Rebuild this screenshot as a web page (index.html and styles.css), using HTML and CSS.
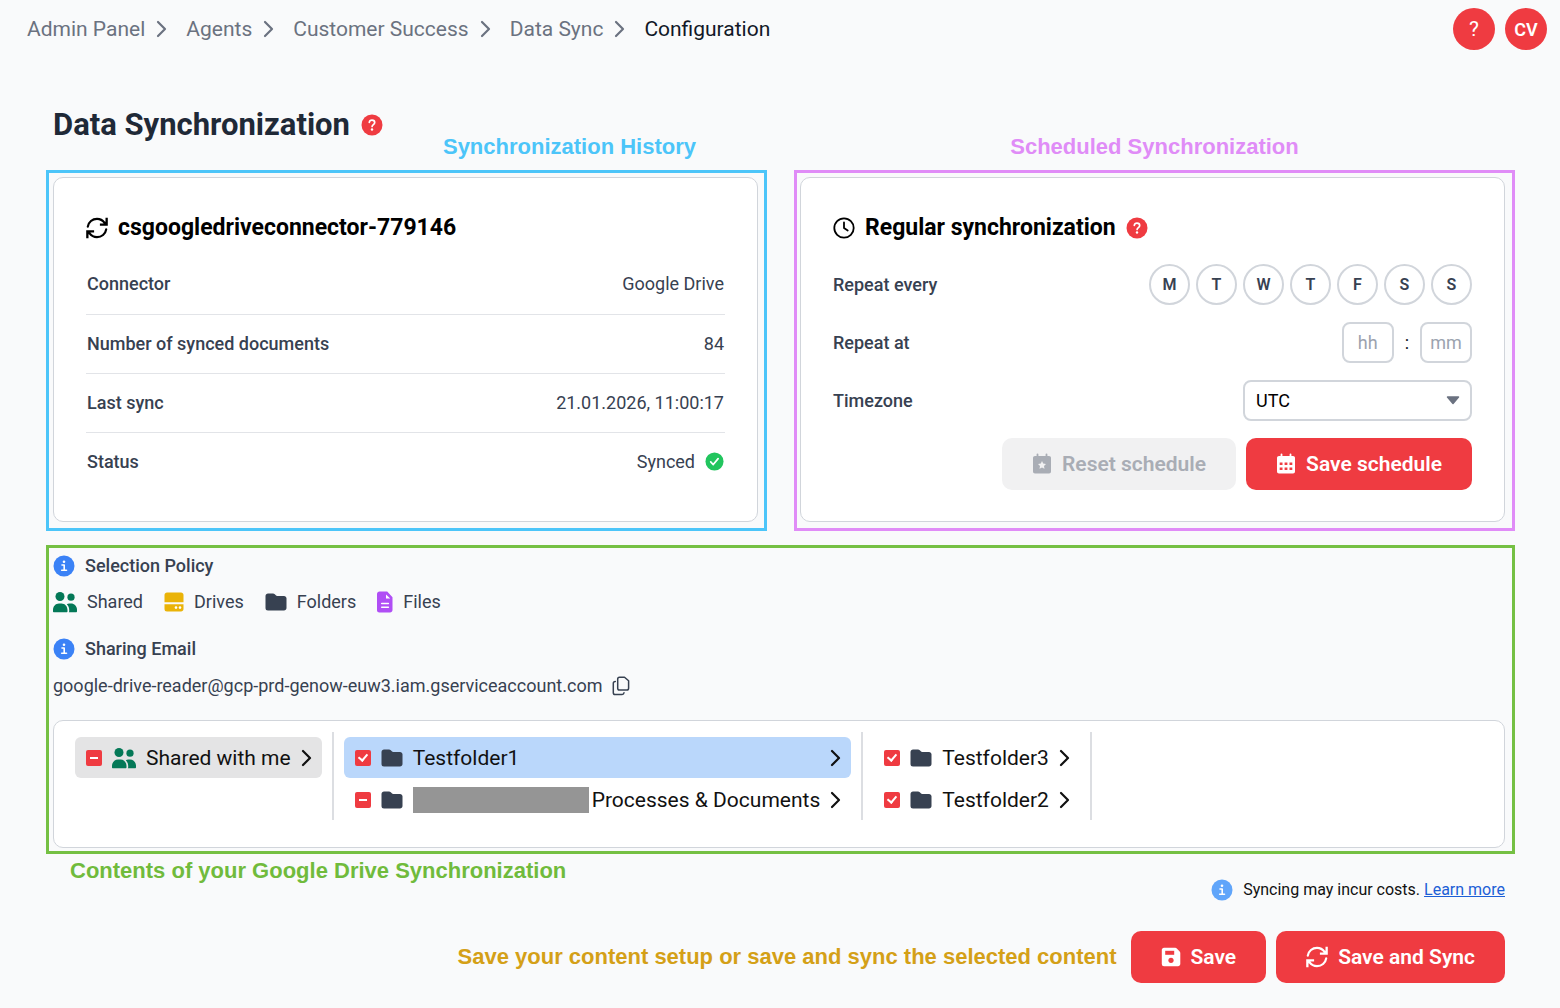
FILE: index.html
```html
<!DOCTYPE html>
<html lang="en">
<head>
<meta charset="UTF-8">
<meta name="viewport" content="width=device-width, initial-scale=1.0">
<title>Data Synchronization</title>
<link rel="stylesheet" href="styles.css">
</head>
<body>

<!-- icons used on the page -->
<svg class="sprite" aria-hidden="true">
    <symbol id="chevron" viewBox="0 0 12 18"><path d="M2 2l7 7-7 7" fill="none" stroke="currentColor" stroke-width="2.2" stroke-linecap="round" stroke-linejoin="round"/></symbol>
    <symbol id="sync" viewBox="0 0 22 22">
        <path d="M1.8 9.6C2.5 5 6.4 1.8 11 1.8c3.2 0 5.8 1.5 7.6 4" fill="none" stroke="currentColor" stroke-width="2.2" stroke-linecap="round"/>
        <path d="M20.2 12.4C19.5 17 15.6 20.2 11 20.2c-3.2 0-5.8-1.5-7.6-4" fill="none" stroke="currentColor" stroke-width="2.2" stroke-linecap="round"/>
        <path d="M21.8.8v7.9h-7.9V6.5h3.5l2.1-2.1V.8zM.2 21.2v-7.9h7.9v2.200H4.600l-2.100 2.100v3.600z" fill="currentColor"/>
    </symbol>
    <symbol id="clock" viewBox="0 0 22 22"><circle cx="11" cy="11" r="9.7" fill="none" stroke="currentColor" stroke-width="1.8"/><path d="M11 5.500V11l3.700 2.500" fill="none" stroke="currentColor" stroke-width="1.8" stroke-linecap="round" stroke-linejoin="round"/></symbol>
    <symbol id="info" viewBox="0 0 22 22"><circle cx="11" cy="11" r="10.5" fill="currentColor"/><circle cx="11" cy="6.8" r="1.3" fill="#fff"/><path d="M9 10h2.2v5M8.700 15.300h4.800" fill="none" stroke="#fff" stroke-width="1.6" stroke-linecap="round" stroke-linejoin="round"/></symbol>
    <symbol id="help" viewBox="0 0 22 22"><circle cx="11" cy="11" r="10.5" fill="currentColor"/><path d="M8.3 8.3c.2-1.4 1.3-2.2 2.7-2.2 1.5 0 2.7 1 2.7 2.4 0 2-2.6 2.1-2.6 4" fill="none" stroke="#fff" stroke-width="1.7" stroke-linecap="round"/><circle cx="11" cy="15.5" r="1.2" fill="#fff"/></symbol>
    <symbol id="done" viewBox="0 0 20 20"><circle cx="10" cy="10" r="9.5" fill="currentColor"/><path d="M6 10.5l2.7 2.7L13.8 7" fill="none" stroke="#fff" stroke-width="1.8" stroke-linecap="round" stroke-linejoin="round"/></symbol>
    <symbol id="people" viewBox="0 0 24 22">
        <circle cx="7" cy="5.5" r="4.5" fill="currentColor"/><circle cx="18" cy="6.2" r="3.6" fill="currentColor"/>
        <path d="M0 20.500v-1.500c0-3.600 2.600-6.500 6-6.500h2.500c3.400 0 6 2.900 6 6.500v1.500c0 .4-.3.7-.7.7H.7c-.4 0-.7-.3-.7-.7zM15.800 21.200c.3-.4.4-.7.4-1.200v-1c0-2.300-.9-4.300-2.400-5.700.7-.5 1.500-.7 2.400-.7h1.800c3.300 0 6 2.700 6 6v1.600c0 .6-.4 1-1 1z" fill="currentColor"/>
    </symbol>
    <symbol id="drive" viewBox="0 0 20 20"><path d="M3 .5h14c1.400 0 2.500 1.100 2.500 2.500v7.200H.5V3C.5 1.600 1.600.5 3 .5z" fill="currentColor"/><path d="M.5 12.200h19V17c0 1.400-1.100 2.500-2.500 2.500H3A2.500 2.500 0 0 1 .5 17z" fill="currentColor"/><circle cx="12" cy="15.6" r="1.3" fill="#fff"/><circle cx="16" cy="15.6" r="1.3" fill="#fff"/></symbol>
    <symbol id="folder" viewBox="0 0 22 18"><path d="M3 .5h5c.7 0 1.300.3 1.800.8l1 1c.4.4.9.6 1.400.6H19c1.400 0 2.500 1 2.500 2.400V15c0 1.400-1.100 2.500-2.500 2.500H3A2.500 2.500 0 0 1 .5 15V3C.5 1.600 1.600.5 3 .5z" fill="currentColor"/></symbol>
    <symbol id="file" viewBox="0 0 16 22"><path d="M2.500.5h7.700l5.300 5.700v12.800c0 1.400-1.100 2.500-2.500 2.500H2.500A2.400 2.400 0 0 1 0 19V3C0 1.600 1.100.5 2.500.5z" fill="currentColor"/><path d="M9 3.500v4h4.200z" fill="#fff"/><path d="M4.700 12.500h6.700M4.700 16.200h6.700" stroke="#fff" stroke-width="1.5" stroke-linecap="round"/></symbol>
    <symbol id="copy" viewBox="0 0 18 20"><path d="M7.500 1.200h5L16.600 4.800v7.400c0 1-.8 1.800-1.800 1.800H7.500c-1 0-1.800-.8-1.800-1.800V3c0-1 .8-1.800 1.800-1.800z" fill="none" stroke="currentColor" stroke-width="1.5" stroke-linejoin="round"/><path d="M3.300 5.500C2 5.500 1.300 6.300 1.300 7.300v9.500c0 1 .8 1.800 1.800 1.800h7c1.200 0 1.800-.6 1.900-1.800" fill="none" stroke="currentColor" stroke-width="1.5" stroke-linecap="round"/></symbol>
    <symbol id="calendar-star" viewBox="0 0 20 22"><path d="M5.500 1.300v3M14.500 1.300v3" stroke="currentColor" stroke-width="1.8" stroke-linecap="round"/><path d="M3 3h14c1.200 0 2 .8 2 2v13.500c0 1.200-.8 2-2 2H3c-1.200 0-2-.8-2-2V5c0-1.200.8-2 2-2z" fill="currentColor"/><path d="M10 8l1.200 2.500 2.800.4-2 2 .5 2.800L10 14.400l-2.500 1.300.5-2.800-2-2 2.800-.4z" fill="#f1f1f2"/></symbol>
    <symbol id="calendar" viewBox="0 0 20 22"><path d="M5.500 1.300v3M14.500 1.300v3" stroke="currentColor" stroke-width="1.8" stroke-linecap="round"/><path d="M3 3h14c1.200 0 2 .8 2 2v13.500c0 1.200-.8 2-2 2H3c-1.200 0-2-.8-2-2V5c0-1.200.8-2 2-2z" fill="currentColor"/><path d="M3.700 9.500h2.800v2.500H3.700zM8.600 9.500h2.800v2.500H8.600zM13.500 9.500h2.800v2.500h-2.800zM3.700 14.500h2.800V17H3.700zM8.600 14.500h2.800V17H8.600zM13.500 14.500h2.800V17h-2.800z" fill="#ef3b41"/></symbol>
    <symbol id="floppy" viewBox="0 0 20 20"><path d="M3 .8h11.200c.6 0 1.200.3 1.600.7l2.900 2.900c.4.4.6 1 .6 1.600V17c0 1.200-1 2.300-2.300 2.300H3A2.300 2.300 0 0 1 .8 17V3C.8 1.800 1.800.8 3 .8z" fill="currentColor"/><path d="M4.200 3.800h9v4h-9z" fill="#ef3b41"/><circle cx="10" cy="13.3" r="2.6" fill="#ef3b41"/></symbol>
</svg>

<header class="topbar">
    <nav class="breadcrumb" aria-label="Breadcrumb">
        <a href="#">Admin Panel</a>
        <svg class="crumb-arrow"><use href="#chevron"/></svg>
        <a href="#">Agents</a>
        <svg class="crumb-arrow"><use href="#chevron"/></svg>
        <a href="#">Customer Success</a>
        <svg class="crumb-arrow"><use href="#chevron"/></svg>
        <a href="#">Data Sync</a>
        <svg class="crumb-arrow"><use href="#chevron"/></svg>
        <a href="#" class="current" aria-current="page">Configuration</a>
    </nav>
    <div class="account">
        <button class="round-button help-button">?</button>
        <button class="round-button">CV</button>
    </div>
</header>

<main>
    <h1>Data Synchronization <svg class="icon help"><use href="#help"/></svg></h1>

    <div class="panels">
        <section class="frame frame-blue">
            <span class="note note-history">Synchronization History</span>
            <div class="card">
                <h2><svg class="icon"><use href="#sync"/></svg> csgoogledriveconnector-779146</h2>
                <table class="details">
                    <tr><th>Connector</th><td>Google Drive</td></tr>
                    <tr><th>Number of synced documents</th><td>84</td></tr>
                    <tr><th>Last sync</th><td>21.01.2026, 11:00:17</td></tr>
                    <tr><th>Status</th><td><span class="status">Synced <svg class="done"><use href="#done"/></svg></span></td></tr>
                </table>
            </div>
        </section>

        <section class="frame frame-pink">
            <span class="note note-schedule">Scheduled Synchronization</span>
            <div class="card">
                <h2><svg class="icon"><use href="#clock"/></svg> Regular synchronization <svg class="icon help"><use href="#help"/></svg></h2>
                <form class="schedule">
                    <div class="field">
                        <span class="field-label">Repeat every</span>
                        <div class="days">
                            <button type="button" class="day">M</button>
                            <button type="button" class="day">T</button>
                            <button type="button" class="day">W</button>
                            <button type="button" class="day">T</button>
                            <button type="button" class="day">F</button>
                            <button type="button" class="day">S</button>
                            <button type="button" class="day">S</button>
                        </div>
                    </div>
                    <div class="field">
                        <label class="field-label" for="hour">Repeat at</label>
                        <div class="time">
                            <input type="text" id="hour" placeholder="hh">
                            <span>:</span>
                            <input type="text" id="minute" placeholder="mm" aria-label="Minutes">
                        </div>
                    </div>
                    <div class="field">
                        <label class="field-label" for="timezone">Timezone</label>
                        <div class="select-wrap">
                            <select id="timezone">
                                <option>UTC</option>
                            </select>
                            <svg class="caret" viewBox="0 0 14 9"><path d="M1.500 1h11L7 7.500z" fill="#6b7280" stroke="#6b7280" stroke-width="1.5" stroke-linejoin="round"/></svg>
                        </div>
                    </div>
                    <div class="buttons">
                        <button type="button" class="button" disabled><svg class="calendar"><use href="#calendar-star"/></svg> Reset schedule</button>
                        <button type="button" class="button"><svg class="calendar"><use href="#calendar"/></svg> Save schedule</button>
                    </div>
                </form>
            </div>
        </section>
    </div>

    <section class="frame frame-green">
        <h3><svg class="icon info"><use href="#info"/></svg> Selection Policy</h3>
        <ul class="legend">
            <li><svg class="people"><use href="#people"/></svg> Shared</li>
            <li><svg class="drive"><use href="#drive"/></svg> Drives</li>
            <li><svg class="folder"><use href="#folder"/></svg> Folders</li>
            <li><svg class="file"><use href="#file"/></svg> Files</li>
        </ul>
        <h3><svg class="icon info"><use href="#info"/></svg> Sharing Email</h3>
        <div class="email">
            google-drive-reader@gcp-prd-genow-euw3.iam.gserviceaccount.com
            <button class="copy-button" aria-label="Copy email"><svg class="copy"><use href="#copy"/></svg></button>
        </div>

        <div class="browser">
            <div class="column">
                <div class="item open">
                    <input type="checkbox" class="partial" id="shared">
                    <svg class="people"><use href="#people"/></svg>
                    <label for="shared">Shared with me</label>
                    <svg class="arrow"><use href="#chevron"/></svg>
                </div>
            </div>
            <div class="column">
                <div class="item selected">
                    <input type="checkbox" id="folder1" checked>
                    <svg class="folder"><use href="#folder"/></svg>
                    <label for="folder1">Testfolder1</label>
                    <svg class="arrow"><use href="#chevron"/></svg>
                </div>
                <div class="item">
                    <input type="checkbox" class="partial" id="processes">
                    <svg class="folder"><use href="#folder"/></svg>
                    <label for="processes"><span class="redacted"></span>Processes &amp; Documents</label>
                    <svg class="arrow"><use href="#chevron"/></svg>
                </div>
            </div>
            <div class="column">
                <div class="item">
                    <input type="checkbox" id="folder3" checked>
                    <svg class="folder"><use href="#folder"/></svg>
                    <label for="folder3">Testfolder3</label>
                    <svg class="arrow"><use href="#chevron"/></svg>
                </div>
                <div class="item">
                    <input type="checkbox" id="folder2" checked>
                    <svg class="folder"><use href="#folder"/></svg>
                    <label for="folder2">Testfolder2</label>
                    <svg class="arrow"><use href="#chevron"/></svg>
                </div>
            </div>
        </div>
    </section>

    <div class="below">
        <span class="note note-contents">Contents of your Google Drive Synchronization</span>
        <p class="costs"><svg class="icon info"><use href="#info"/></svg> <span>Syncing may incur costs. <a href="#">Learn more</a></span></p>
    </div>

    <div class="buttons save-row">
        <span class="note note-save">Save your content setup or save and sync the selected content</span>
        <button class="button"><svg class="floppy"><use href="#floppy"/></svg> Save</button>
        <button class="button"><svg class="icon"><use href="#sync"/></svg> Save and Sync</button>
    </div>
</main>

</body>
</html>
```

FILE: styles.css
```css
* {
    box-sizing: border-box;
}
body {
    margin: 0;
    font-family: Roboto, sans-serif;
    font-size: 18px;
    line-height: 24px;
    color: #374151;
    background-color: #f9fafb;
}
h1, h2, h3, p, ul {
    margin: 0;
    padding: 0;
}
button, input, select {
    font-family: inherit;
}
button {
    cursor: pointer;
}
svg {
    flex: none;
}
.sprite {
    position: absolute;
    width: 0;
    height: 0;
}
.icon {
    width: 22px;
    height: 22px;
}
.help {
    color: #ef3b41;
}
.info {
    color: #3b82f6;
}

/* top bar */
.topbar {
    display: flex;
    justify-content: space-between;
    align-items: center;
    padding: 8px 13px 8px 27px;
}
.breadcrumb {
    display: flex;
    align-items: center;
    font-size: 21px;
}
.breadcrumb a {
    color: #6b7280;
    text-decoration: none;
}
.breadcrumb .current {
    color: #111827;
}
.crumb-arrow {
    width: 12px;
    height: 18px;
    margin: 0 18px 0 11px;
    color: #6b7280;
}
.account {
    display: flex;
    gap: 10px;
}
.round-button {
    width: 42px;
    height: 42px;
    padding: 0;
    border: none;
    border-radius: 50%;
    background-color: #ef3b41;
    color: white;
    font-size: 18px;
    font-weight: 600;
}
.help-button {
    font-size: 21px;
    font-weight: 400;
}

main {
    padding: 47px 45px 25px 46px;
}
h1 {
    display: flex;
    align-items: center;
    gap: 11px;
    margin: 0 0 25px 7px;
    font-size: 31px;
    line-height: 40px;
    font-weight: 700;
    color: #1f2937;
}

/* coloured frames and their captions */
.frame {
    position: relative;
    border: 3px solid;
}
.frame-blue {
    border-color: #4cc5f9;
}
.frame-pink {
    border-color: #e08cf7;
}
.frame-green {
    border-color: #75c043;
    margin-top: 14px;
    padding: 6px 7px 3px 4px;
}
.note {
    font-family: "Liberation Sans", Arial, sans-serif;
    font-size: 22px;
    line-height: 26px;
    font-weight: 700;
    white-space: nowrap;
}
.note-history {
    position: absolute;
    top: -39px;
    right: 68px;
    color: #4cc5f9;
}
.note-schedule {
    position: absolute;
    top: -39px;
    left: 0;
    right: 0;
    text-align: center;
    color: #e08cf7;
}
.note-contents {
    margin: 4px 0 0 24px;
    color: #70bb3c;
}
.note-save {
    margin-right: 4px;
    color: #d4a017;
}

.panels {
    display: grid;
    grid-template-columns: 1fr 1fr;
    gap: 27px;
}
.panels .frame {
    display: grid;
    padding: 4px 6px 6px 4px;
}
.panels .frame-pink {
    padding: 4px 7px 6px 3px;
}
.card {
    padding: 34px 32px 30px;
    border: 1px solid #d1d5db;
    border-radius: 10px;
    background-color: white;
}
h2 {
    display: flex;
    align-items: center;
    gap: 10px;
    font-size: 23px;
    line-height: 32px;
    font-weight: 700;
    color: #000;
}

/* sync details */
.details {
    width: 100%;
    margin-top: 11px;
    border-collapse: collapse;
}
.details th, .details td {
    height: 59px;
    padding: 0 1px;
    border-bottom: 1px solid #e2e4e8;
}
.details th {
    text-align: left;
    font-weight: 500;
}
.details td {
    text-align: right;
}
.details tr:last-child > * {
    border-bottom: none;
}
.status {
    display: flex;
    align-items: center;
    justify-content: flex-end;
    gap: 10px;
}
.done {
    width: 19px;
    height: 19px;
    color: #22c55e;
}

/* schedule form */
.schedule {
    display: flex;
    flex-direction: column;
    gap: 17px;
    margin-top: 20px;
}
.field {
    display: flex;
    align-items: center;
    justify-content: space-between;
}
.field-label {
    font-weight: 500;
}
.days {
    display: flex;
    gap: 6px;
}
.day {
    width: 41px;
    height: 41px;
    padding: 0;
    border: 2px solid #d1d5db;
    border-radius: 50%;
    background-color: white;
    color: #374151;
    font-size: 16px;
    font-weight: 600;
}
.time {
    display: flex;
    align-items: center;
    gap: 11px;
    color: #111827;
}
.time input {
    width: 52px;
    height: 41px;
    padding: 0;
    border: 2px solid #d1d5db;
    border-radius: 8px;
    text-align: center;
    font-size: 18px;
}
.time input::placeholder {
    color: #9ca3af;
}
.select-wrap {
    position: relative;
    width: 229px;
}
.select-wrap select {
    width: 100%;
    height: 41px;
    padding: 0 11px;
    border: 2px solid #d1d5db;
    border-radius: 8px;
    appearance: none;
    background-color: white;
    color: #000;
    font-size: 18px;
}
.caret {
    position: absolute;
    top: 16px;
    right: 12px;
    width: 14px;
    height: 9px;
    pointer-events: none;
}
.buttons {
    display: flex;
    align-items: center;
    justify-content: flex-end;
    gap: 10px;
}
.button {
    display: flex;
    align-items: center;
    gap: 10px;
    height: 52px;
    padding: 0 30px;
    border: none;
    border-radius: 10px;
    background-color: #ef3b41;
    color: white;
    font-size: 21px;
    font-weight: 600;
}
.button:disabled {
    background-color: #f1f1f2;
    color: #a9adb5;
    cursor: default;
}
.calendar {
    width: 20px;
    height: 22px;
}
.floppy {
    width: 20px;
    height: 20px;
}

/* selection policy */
h3 {
    display: flex;
    align-items: center;
    gap: 10px;
    font-size: 18px;
    line-height: 24px;
    font-weight: 500;
}
.legend {
    display: flex;
    gap: 21px;
    margin: 12px 0 23px;
    list-style: none;
}
.legend li {
    display: flex;
    align-items: center;
    gap: 10px;
}
.people {
    width: 24px;
    height: 22px;
    color: #047857;
}
.drive {
    width: 20px;
    height: 20px;
    color: #eab308;
}
.folder {
    width: 22px;
    height: 18px;
    color: #374151;
}
.file {
    width: 16px;
    height: 22px;
    color: #b04ef5;
}
.email {
    display: flex;
    align-items: center;
    gap: 10px;
    margin: 13px 0 22px;
}
.copy-button {
    display: flex;
    padding: 0;
    border: none;
    background: none;
    color: #374151;
}
.copy {
    width: 18px;
    height: 20px;
}

/* folder browser */
.browser {
    display: flex;
    padding: 11px 11px 27px;
    border: 1px solid #d1d5db;
    border-radius: 10px;
    background-color: white;
}
.column {
    display: flex;
    flex-direction: column;
    gap: 1px;
    padding: 5px 10px 0;
    border-right: 2px solid #dcdee2;
}
.item {
    display: flex;
    align-items: center;
    height: 41px;
    padding: 0 9px 0 11px;
    border-radius: 6px;
    font-size: 21px;
    color: #111;
}
.item.open {
    background-color: #e4e4e5;
}
.item.selected {
    background-color: #bad7fb;
}
.item input {
    position: relative;
    width: 16px;
    height: 16px;
    margin: 0 10px 0 0;
    appearance: none;
    border-radius: 2px;
    background-color: #ef3b41;
}
.item input::before {
    content: "";
    position: absolute;
    top: 2px;
    left: 5px;
    width: 4px;
    height: 7px;
    border: solid white;
    border-width: 0 2px 2px 0;
    transform: rotate(40deg);
}
.item input.partial::before {
    top: 7px;
    left: 4px;
    width: 8px;
    height: 2px;
    border: none;
    background-color: white;
    transform: none;
}
.item label {
    display: flex;
    align-items: center;
    flex: 1;
    margin: 0 10px;
    white-space: nowrap;
}
.arrow {
    width: 12px;
    height: 18px;
}
.redacted {
    width: 176px;
    height: 26px;
    margin-right: 3px;
    background-color: #959595;
}

.below {
    display: flex;
    justify-content: space-between;
    align-items: flex-start;
}
.costs {
    display: flex;
    align-items: center;
    gap: 10px;
    margin: 24px 10px 0 0;
    font-size: 16px;
    color: #111;
}
.costs .info {
    color: #60a5fa;
}
.costs a {
    color: #1d5fd6;
}
.save-row {
    margin: 29px 10px 0 0;
}
```
